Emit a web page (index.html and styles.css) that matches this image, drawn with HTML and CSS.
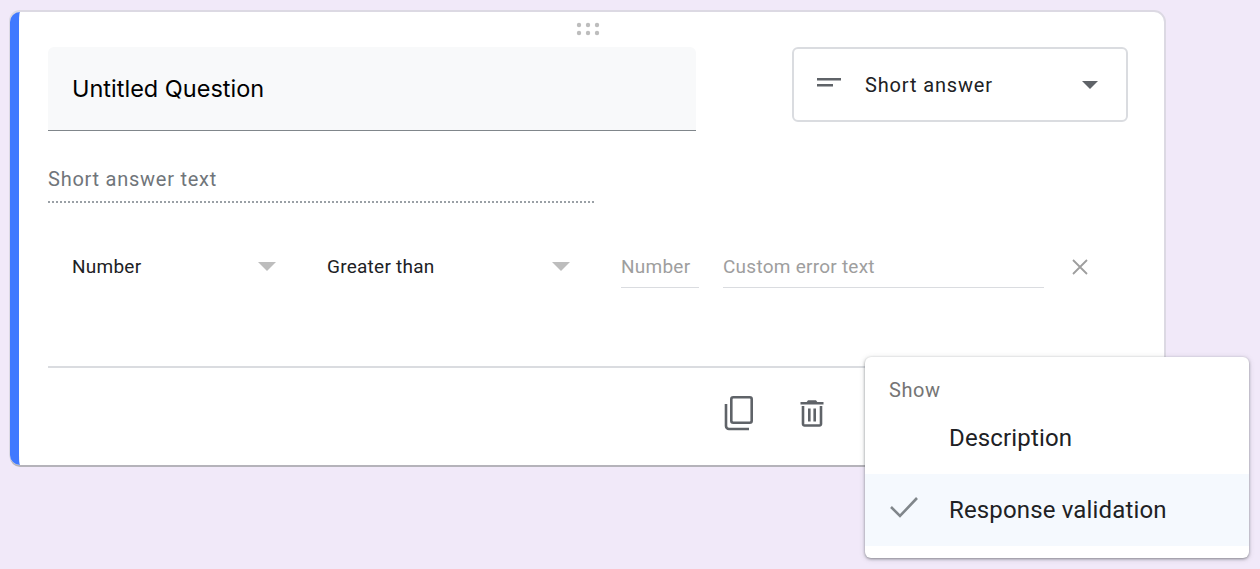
FILE: index.html
```html
<!DOCTYPE html>
<html lang="en">
<head>
    <meta charset="UTF-8">
    <title>Untitled Question</title>
    <link rel="stylesheet" href="styles.css">
</head>
<body>

<div class="card">
  <svg class="drag" width="24" height="14" viewBox="0 0 24 14">
    <g fill="#bdbdbd">
      <circle cx="3" cy="3" r="2.2"/><circle cx="12" cy="3" r="2.2"/><circle cx="21" cy="3" r="2.2"/>
      <circle cx="3" cy="11" r="2.2"/><circle cx="12" cy="11" r="2.2"/><circle cx="21" cy="11" r="2.2"/>
    </g>
  </svg>

  <div class="top-row">
    <div class="title-box">Untitled Question</div>
    <div class="type-select">
      <svg class="lines" width="24" height="10" viewBox="0 0 24 10">
        <rect x="0" y="0" width="24" height="2.5" fill="#5f6368"/>
        <rect x="0" y="6" width="16" height="2.5" fill="#5f6368"/>
      </svg>
      <span class="type-label">Short answer</span>
      <span class="arrow arrow-dark"></span>
    </div>
  </div>

  <div class="answer-line">Short answer text</div>

  <div class="validation">
    <div class="drop drop-first"><span>Number</span><span class="arrow"></span></div>
    <div class="drop drop-second"><span>Greater than</span><span class="arrow"></span></div>
    <div class="field field-num">Number</div>
    <div class="field field-err">Custom error text</div>
    <svg class="close" width="18" height="18" viewBox="0 0 18 18">
      <path d="M2 2L16 16M16 2L2 16" stroke="#9e9e9e" stroke-width="1.8" fill="none"/>
    </svg>
  </div>

  <div class="footer">
    <svg class="copy" width="32" height="36" viewBox="0 0 32 36">
      <path d="M3 9V31a3 3 0 0 0 3 3H26" fill="none" stroke="#5f6368" stroke-width="2.6"/>
      <rect x="8.3" y="2.3" width="20.4" height="25.4" rx="2" fill="none" stroke="#5f6368" stroke-width="2.6"/>
    </svg>
    <svg class="trash" width="24" height="28" viewBox="0 0 24 28">
      <path d="M8 1.3H16L17.3 3H23.5V5.5H.5V3H6.7Z" fill="#5f6368"/>
      <path d="M3 7V25a1.5 1.5 0 0 0 1.5 1.5H19.5A1.5 1.5 0 0 0 21 25V7" fill="none" stroke="#5f6368" stroke-width="2.6"/>
      <rect x="8" y="9.5" width="2.6" height="13" fill="#5f6368"/>
      <rect x="13.4" y="9.5" width="2.6" height="13" fill="#5f6368"/>
    </svg>
  </div>
</div>

<!-- menu sits over the card corner -->
<div class="menu">
  <div class="menu-head">Show</div>
  <div class="menu-item">
    <span class="menu-check"></span>
    <span>Description</span>
  </div>
  <div class="menu-item menu-item-on">
    <span class="menu-check">
      <svg width="30" height="24" viewBox="0 0 30 24">
        <path d="M2 12L11 21L28 3" fill="none" stroke="#80868b" stroke-width="2.6"/>
      </svg>
    </span>
    <span>Response validation</span>
  </div>
</div>

</body>
</html>
```

FILE: styles.css
```css
body{
  margin:0;
  height:569px;
  overflow:hidden;
  position:relative;
  background-color:#f1e9f9;
  font-family:"Roboto","Liberation Sans",sans-serif;
  color:#202124;
}

.card{
  position:relative;
  box-sizing:border-box;
  width:1154px;
  height:453px;
  margin:12px 0 0 10px;
  padding:35px 36px 0 38px;
  background-color:#fff;
  border-left:9px solid #4079ff;
  border-radius:10px;
  box-shadow:0 -1px 0 1px #dcd9e3, 0 2px 0 #b5b3ba, 1px 0 0 1px #dcd9e3;
}

.drag{
  position:absolute;
  top:10px;
  left:557px;
}

.top-row{
  display:flex;
  justify-content:space-between;
  align-items:flex-start;
  margin-left:-9px;
}
.title-box{
  box-sizing:border-box;
  width:648px;
  height:84px;
  padding:0 24px;
  display:flex;
  align-items:center;
  background-color:#f8f9fa;
  border-bottom:1px solid #80868b;
  border-radius:6px 6px 0 0;
  font-family:"Inter","Roboto",sans-serif;
  font-size:23.5px;
  color:#000;
}
.type-select{
  box-sizing:border-box;
  width:336px;
  height:75px;
  padding:0 28px 0 23px;
  display:flex;
  align-items:center;
  border:2px solid #dadce0;
  border-radius:6px;
}
.lines{
  margin-bottom:3px;
}
.type-label{
  flex:1;
  margin-left:24px;
  font-size:20px;
  letter-spacing:.85px;
}

.arrow{
  width:0;
  height:0;
  border-left:9px solid transparent;
  border-right:9px solid transparent;
  border-top:9px solid #bdbdbd;
}
.arrow-dark{
  border-left-width:8px;
  border-right-width:8px;
  border-top:8px solid #5f6368;
}

.answer-line{
  box-sizing:border-box;
  width:546px;
  height:47px;
  margin:25px 0 0 -9px;
  padding-top:11px;
  border-bottom:2px dotted #9aa0a6;
  font-size:20px;
  letter-spacing:.75px;
  color:#70757a;
}

.validation{
  display:flex;
  align-items:flex-start;
  margin:43px 0 0 -9px;
  height:120px;
  font-size:19px;
  letter-spacing:.25px;
}
.drop{
  display:flex;
  justify-content:space-between;
  align-items:center;
  box-sizing:border-box;
  height:40px;
  padding-left:24px;
}
.drop-first{
  width:228px;
}
.drop-second{
  width:243px;
  margin-left:51px;
  padding-left:0;
}
.field{
  box-sizing:border-box;
  height:42px;
  padding-top:9px;
  border-bottom:1px solid #dadce0;
  color:#9e9e9e;
  white-space:nowrap;
}
.field-num{
  width:78px;
  margin-left:51px;
}
.field-err{
  width:321px;
  margin-left:24px;
}
.close{
  margin:12px 0 0 27px;
}

.footer{
  display:flex;
  align-items:flex-start;
  box-sizing:border-box;
  height:98px;
  margin:0 -36px 0 -9px;
  padding:27px 0 0 675px;
  border-top:2px solid #dadce0;
}
.trash{
  margin:4px 0 0 45px;
}

.menu{
  position:absolute;
  left:865px;
  top:357px;
  box-sizing:border-box;
  width:384px;
  height:201px;
  background-color:#fff;
  border-radius:6px;
  box-shadow:0 1px 3px rgba(60,64,67,.55), 0 1px 6px rgba(60,64,67,.15);
}
.menu-head{
  padding:21px 24px 0;
  height:24px;
  line-height:25px;
  font-size:20px;
  letter-spacing:.6px;
  color:#757575;
}
.menu-item{
  display:flex;
  align-items:center;
  height:72px;
  font-size:24px;
  letter-spacing:.15px;
  padding-left:24px;
}
.menu-item-on{
  background-color:#f5f9fe;
}
.menu-check{
  display:flex;
  width:60px;
  margin-bottom:6px;
}
```
